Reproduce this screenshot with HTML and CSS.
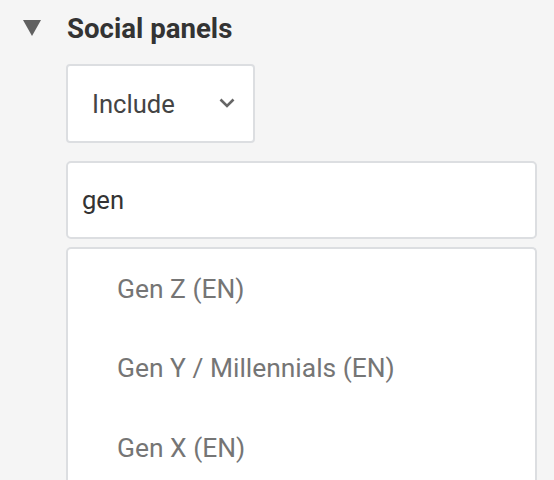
FILE: index.html
```html
<!DOCTYPE html>
<html>
<head>
<meta charset="utf-8">
<link rel="stylesheet" href="styles.css">
</head>
<body>
<div class="panel">
  <div class="header">
    <svg class="caret" width="18" height="16" viewBox="0 0 18 16"><polygon points="0,0 18,0 9,16" fill="#616161"/></svg>
    <span class="title">Social panels</span>
  </div>
  <div class="body">
    <div class="select">
      <span class="select-label">Include</span>
      <svg class="chevron" width="16" height="10" viewBox="0 0 16 10"><polyline points="1.5,1.5 8,8 14.5,1.5" fill="none" stroke="#666" stroke-width="2.6"/></svg>
    </div>
    <div class="input">gen</div>
    <div class="dropdown">
      <div class="option">Gen Z (EN)</div>
      <div class="option">Gen Y / Millennials (EN)</div>
      <div class="option">Gen X (EN)</div>
    </div>
  </div>
</div>
</body>
</html>
```
FILE: styles.css
```css
html, body {
  margin: 0;
  padding: 0;
  background: #f5f5f5;
  font-family: Roboto, "Liberation Sans", sans-serif;
  height: 480px;
  overflow: hidden;
}
.panel {
  padding: 12px 0 0 23px;
}
.header {
  display: flex;
  align-items: center;
  height: 32px;
}
.caret {
  display: block;
}
.title {
  margin-left: 26px;
  font-size: 27.6px;
  font-weight: 700;
  color: #333;
}
.body {
  padding-left: 43px;
  padding-top: 20px;
  display: flex;
  flex-direction: column;
  align-items: flex-start;
}
.select {
  box-sizing: border-box;
  width: 189px;
  height: 79px;
  background: #fff;
  border: 2px solid #dcdee1;
  border-radius: 4px;
  display: flex;
  align-items: center;
  justify-content: space-between;
  padding: 0 18px 0 24px;
}
.select-label {
  font-size: 25.6px;
  color: #444;
}
.chevron {
  display: block;
  margin-top: -2px;
}
.input {
  box-sizing: border-box;
  margin-top: 18px;
  width: 471px;
  height: 78px;
  background: #fff;
  border: 2px solid #dcdee1;
  border-radius: 5px;
  display: flex;
  align-items: center;
  padding: 0 0 0 14px;
  font-size: 25.6px;
  color: #333;
}
.dropdown {
  box-sizing: border-box;
  margin-top: 8px;
  width: 471px;
  height: 233px;
  background: #fff;
  border: 2px solid #dcdee1;
  border-bottom: 0;
  border-radius: 5px 5px 0 0;
  overflow: hidden;
}
.option {
  height: 79.5px;
  display: flex;
  align-items: center;
  padding-left: 49px;
  font-size: 26.4px;
  color: #757575;
}
```
